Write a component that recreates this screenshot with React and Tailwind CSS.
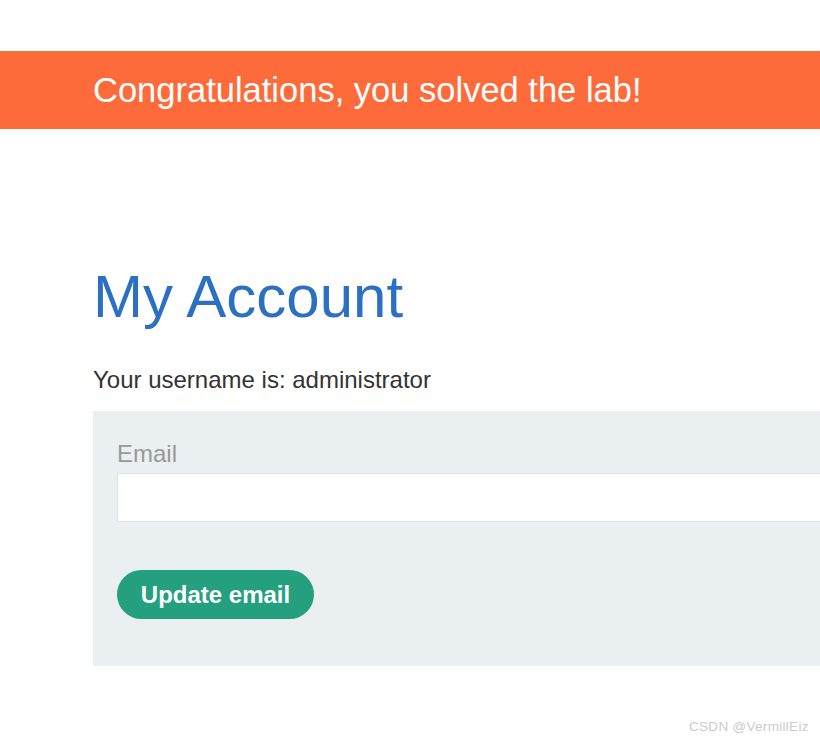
import { useState } from 'react';

export default function App() {
    const [email, setEmail] = useState('');

    return (
        <div className="relative w-[820px] h-[742px] overflow-hidden bg-white" style={{ fontFamily: '"Liberation Sans", Arial, sans-serif' }}>
            <div className="h-[51px]" />

            {/* 解題成功橫幅 */}
            <div className="h-[78px] bg-[#fe6b3b] flex items-center pl-[93px]">
                <h4 className="text-white text-[34.5px] leading-none">Congratulations, you solved the lab!</h4>
            </div>

            <div className="pl-[93px] pt-[138px]">
                <h1 className="text-[#2b70c2] text-[60px] leading-none">My Account</h1>
                <p className="mt-[41px] text-[#333332] text-[24px] leading-none">Your username is: administrator</p>

                {/* 表單區塊延伸到畫面右緣之外 */}
                <form onSubmit={(e) => e.preventDefault()} className="mt-[19px] w-[780px] bg-[#eaeff2] h-[255px] pl-6 pt-[31px]">
                    <label className="block text-[#999999] text-[24px] leading-none">Email</label>
                    <input
                        name="email"
                        value={email}
                        onChange={(e) => setEmail(e.target.value)}
                        className="mt-[7px] block w-[740px] h-[49px] bg-white border border-[#e3e3e3] outline-none px-3"
                    />
                    <button type="submit" className="mt-[48px] w-[197px] h-[49px] rounded-full bg-[#25a07f] text-white font-bold text-[24px] leading-none">
                        Update email
                    </button>
                </form>
            </div>

            <div className="absolute left-[689px] top-[717px] text-[13.5px] tracking-[0.3px] text-[#cccccc]">CSDN @VermillEiz</div>
        </div>
    );
}
